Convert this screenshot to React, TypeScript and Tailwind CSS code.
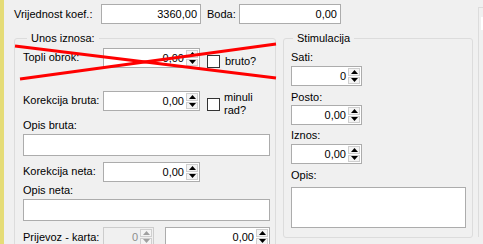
import React from "react";

const font = { fontFamily: '"Liberation Sans", Arial, sans-serif' };

function Arrows({ disabled }: { disabled?: boolean }) {
  const c = disabled ? "#a0a0a0" : "#000";
  return (
    <div className="flex w-[13px] flex-col gap-[1px] py-[1px] pr-[1px]">
      <div className="flex flex-1 items-center justify-center border border-[#cfcfcf] bg-[#f4f4f4]">
        <svg width="7" height="4" viewBox="0 0 7 4">
          <path d="M0 4 L3.5 0 L7 4 Z" fill={c} />
        </svg>
      </div>
      <div className="flex flex-1 items-center justify-center border border-[#cfcfcf] bg-[#f4f4f4]">
        <svg width="7" height="4" viewBox="0 0 7 4">
          <path d="M0 0 L7 0 L3.5 4 Z" fill={c} />
        </svg>
      </div>
    </div>
  );
}

function Spin({ value, w, disabled }: { value: string; w: string; disabled?: boolean }) {
  return (
    <div
      className={`flex h-[20px] shrink-0 border ${w} ${
        disabled ? "border-[#cccccc] bg-[#f0f0f0] text-[#8d8d8d]" : "border-[#acacac] bg-white text-black"
      }`}
    >
      <div className="flex-1 pr-[2px] text-right leading-[18px]">{value}</div>
      <Arrows disabled={disabled} />
    </div>
  );
}

function Box({ w, h, value }: { w: string; h: string; value?: string }) {
  return (
    <div className={`shrink-0 border border-[#acacac] bg-white pr-[3px] text-right leading-[18px] ${w} ${h}`}>
      {value}
    </div>
  );
}

function Check() {
  return <div className="h-[13px] w-[13px] shrink-0 border border-[#333] bg-white" />;
}

export default function App() {
  return (
    <div
      className="flex h-[244px] w-[483px] overflow-hidden bg-[#f0f0f0] text-[11px] leading-[14px] text-black"
      style={font}
    >
      <div className="w-[4px] shrink-0 bg-[#e5dc77]" />
      <div className="flex-1 pt-[4px]">
        {/* top row */}
        <div className="flex items-center pl-[10px]">
          <div className="w-[87px]">Vrijednost koef.:</div>
          <Box w="w-[100px]" h="h-[20px]" value="3360,00" />
          <div className="w-[38px] pl-[6px]">Boda:</div>
          <Box w="w-[102px]" h="h-[20px]" value="0,00" />
        </div>

        <div className="mt-[7px] flex items-start pl-[10px]">
          {/* Unos iznosa */}
          <div className="relative">
            <fieldset className="h-[240px] w-[262px] rounded-[3px] border border-[#dcdcdc] pl-[8px] pt-[3px]">
              <legend className="ml-[4px] px-[4px]">Unos iznosa:</legend>
              <div className="flex items-start">
                <div className="w-[80px] pt-[2px]">Topli obrok:</div>
                <Spin value="0,00" w="w-[97px]" />
                <div className="ml-[7px] mt-[7px]">
                  <Check />
                </div>
                <div className="ml-[5px] mt-[6px]">bruto?</div>
              </div>

              <div className="mt-[23px] flex items-start">
                <div className="w-[80px] pt-[2px]">Korekcija bruta:</div>
                <Spin value="0,00" w="w-[97px]" />
                <div className="ml-[7px] mt-[7px]">
                  <Check />
                </div>
                <div className="ml-[4px] leading-[13px]">
                  minuli
                  <br />
                  rad?
                </div>
              </div>

              <div className="mt-[1px]">Opis bruta:</div>
              <div className="mt-[2px]">
                <Box w="w-[247px]" h="h-[22px]" />
              </div>

              <div className="mt-[6px] flex items-start">
                <div className="w-[80px] pt-[2px]">Korekcija neta:</div>
                <Spin value="0,00" w="w-[97px]" />
              </div>

              <div className="mt-[1px]">Opis neta:</div>
              <div className="mt-[2px]">
                <Box w="w-[247px]" h="h-[22px]" />
              </div>

              <div className="mt-[6px] flex items-start">
                <div className="w-[80px] pt-[3px]">Prijevoz - karta:</div>
                <Spin value="0" w="w-[51px]" disabled />
                <div className="ml-[11px]">
                  <Spin value="0,00" w="w-[105px]" />
                </div>
              </div>
            </fieldset>
            <svg className="pointer-events-none absolute left-0 top-0" width="270" height="60" viewBox="0 0 270 60">
              <line x1="1" y1="15" x2="262" y2="47" stroke="#ff0000" strokeWidth="3" />
              <line x1="6" y1="48" x2="262" y2="13" stroke="#ff0000" strokeWidth="3" />
            </svg>
          </div>

          {/* Stimulacija */}
          <fieldset className="ml-[7px] w-[190px] rounded-[3px] border border-[#dcdcdc] pb-[9px] pl-[7px]">
            <legend className="ml-[2px] px-[4px]">Stimulacija</legend>
            <div className="mt-[5px]">Sati:</div>
            <div className="mt-[2px]">
              <Spin value="0" w="w-[71px]" />
            </div>
            <div className="mt-[4px]">Posto:</div>
            <div className="mt-[1px]">
              <Spin value="0,00" w="w-[71px]" />
            </div>
            <div className="mt-[3px]">Iznos:</div>
            <div className="mt-[2px]">
              <Spin value="0,00" w="w-[71px]" />
            </div>
            <div className="mt-[4px]">Opis:</div>
            <div className="mt-[5px]">
              <Box w="w-[175px]" h="h-[41px]" />
            </div>
          </fieldset>

          {/* right edge panel */}
          <div className="-mt-[24px] ml-[5px] h-[230px] flex-1 border-l border-t border-[#dcdcdc] pl-[2px] pt-[9px]">
            <div className="h-[13px] w-full bg-white" />
          </div>
        </div>
      </div>
    </div>
  );
}
